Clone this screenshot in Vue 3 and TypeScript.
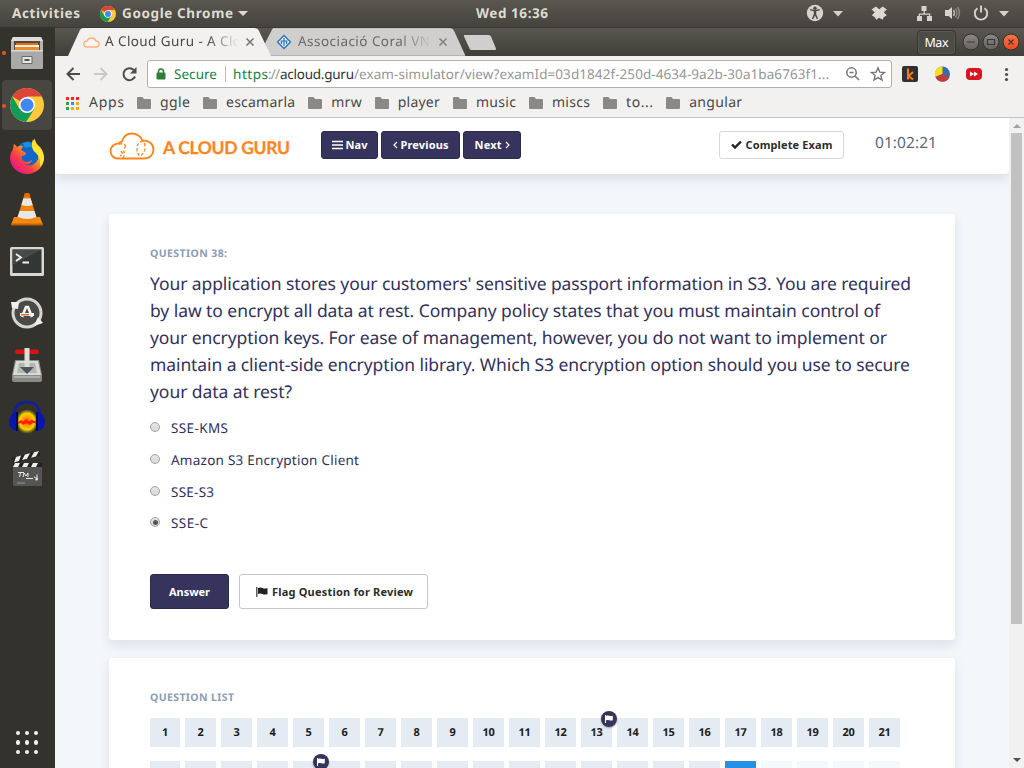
<script setup lang="ts">
interface Bookmark { label: string; width: number }
interface Option { label: string; width: number; picked: boolean }
interface Cell { n: number; label: string; state: 'done' | 'current' | 'open'; flagged: boolean }

// Tracks a label out or in so that it fills the given width.
const vFit = {
  mounted(el: HTMLElement, binding: { value: number }) {
    const count = (el.textContent ?? '').length
    const natural = el.getBoundingClientRect().width
    el.style.letterSpacing = `${(binding.value - natural) / Math.max(1, count - 1)}px`
    el.style.width = `${binding.value}px`
  },
}

const bookmarks: Bookmark[] = [
  { label: 'ggle', width: 30 },
  { label: 'escamarla', width: 69 },
  { label: 'mrw', width: 30.5 },
  { label: 'player', width: 42 },
  { label: 'music', width: 40 },
  { label: 'miscs', width: 38 },
  { label: 'to...', width: 27 },
  { label: 'angular', width: 53 },
]

const lines = [
  { text: "Your application stores your customers' sensitive passport information in S3. You are required", width: 761 },
  { text: 'by law to encrypt all data at rest. Company policy states that you must maintain control of', width: 730 },
  { text: 'your encryption keys. For ease of management, however, you do not want to implement or', width: 737 },
  { text: 'maintain a client-side encryption library. Which S3 encryption option should you use to secure', width: 760 },
  { text: 'your data at rest?', width: 142 },
]

const options: Option[] = [
  { label: 'SSE-KMS', width: 57, picked: false },
  { label: 'Amazon S3 Encryption Client', width: 188, picked: false },
  { label: 'SSE-S3', width: 43, picked: false },
  { label: 'SSE-C', width: 37, picked: true },
]

const flagged = [13, 26]
const cells: Cell[] = Array.from({ length: 42 }, (_, i) => ({
  n: i + 1,
  label: i < 21 ? String(i + 1) : '',
  state: i + 1 < 38 ? 'done' : i + 1 === 38 ? 'current' : 'open',
  flagged: flagged.includes(i + 1),
}))
const swatches = ['#f22', '#f22', '#f22', '#35a04c', '#3b8cf0', '#fba31c', '#35a04c', '#fba31c', '#fba31c']
</script>

<template>
  <div class="desktop">
    <header class="topbar">
      <b v-fit="68" class="activities">Activities</b>
      <svg class="tiny-chrome" width="16" height="16" viewBox="0 0 34 34">
        <circle cx="17" cy="17" r="17" fill="#fdca3d" />
        <path d="M17 17 2.3 8.5A17 17 0 0 1 31.7 8.5H17Z" fill="#dc4437" />
        <path d="M2.3 8.5A17 17 0 0 0 16 34L24.4 21 17 17 9.6 21Z" fill="#159b58" />
        <circle cx="17" cy="17" r="8" fill="#fff" /><circle cx="17" cy="17" r="6.3" fill="#4286f5" />
      </svg>
      <b v-fit="111" class="appname">Google Chrome</b>
      <i class="caret"></i>
      <b v-fit="72" class="clock">Wed 16:36</b>
      <svg class="tray" width="204" height="28" viewBox="0 0 204 28" fill="#d6d3cd">
        <circle cx="9" cy="13" r="8.2" />
        <g fill="#4b4a44"><circle cx="9" cy="8.3" r="1.7" /><path d="M4 10.2l3.8 1v3L5.9 18.6l1.2.6L9 15.5l1.9 3.7 1.2-.6-1.9-4.4v-3l3.8-1-.3-1.1-4.7.8-4.7-.8Z" /></g>
        <path d="M27 11h10l-5 5.5Z" />
        <path d="M65.500 9.500 70 6.500l3.300 2.800 3.400-2.800 4.100 3-3 2.800 3 2.900-3.100 2-1.200 2.600-3.200-2-3.200 2-1-2.400-3.300-2.200 3-2.900Z" fill="#dedad3" />
        <path d="M115.500 6h5v5h-5zM111 16h5v5h-5zM121 16h5v5h-5zM117.500 11h1.300v2.500h5.500v3H123v-1.700h-9v1.700h-1.300v-3h4.800z" />
        <path d="M139 10h3.500L146 7v12l-3.500-3H139Z" />
        <path d="M147.500 10q1.800 3 0 6" fill="none" stroke="#c5c2bb" stroke-width="1.400" />
        <path d="M149.500 8.500q3 4.500 0 9M151.500 7q4 6 0 12" fill="none" stroke="#8b8982" stroke-width="1.400" />
        <path d="M171.500 8.300a6.200 6.200 0 1 0 7 0M175 5.500v7" fill="none" stroke="#d6d3cd" stroke-width="1.900" />
        <path d="M193 11h10l-5 5.500Z" />
      </svg>
    </header>

    <div class="workspace">
      <nav class="dock">
        <div class="slot running">
          <svg width="36" height="36" viewBox="0 0 36 36">
            <path d="M4 2h28l2 4v26q0 2-2 2H4q-2 0-2-2V6Z" fill="#b4b4b2" />
            <path d="M4 2h28l2 4H2Z" fill="#dedddb" /><path d="M5 6h26v10H5Z" fill="#514a43" />
            <path d="M7 8h22v8H7Z" fill="#e36d19" /><path d="M6 10h24v2H6Z" fill="#fff2db" /><path d="M6 12h24v3H6Z" fill="#e98a35" />
            <path d="M2 15h32v17q0 2-2 2H4q-2 0-2-2Z" fill="#a9a9a7" /><path d="M2 15h32v1.500H2Z" fill="#d8d8d6" />
            <path d="M13 21.500h10v7H13Z" fill="#e6e6e4" stroke="#6a6a69" /><path d="M15.500 24h5v2h-5Z" fill="#555" />
          </svg>
        </div>
        <div class="slot running focused">
          <svg width="34" height="34" viewBox="0 0 34 34">
            <circle cx="17" cy="17" r="17" fill="#fdca3d" />
            <path d="M17 17 2.300 8.500A17 17 0 0 1 31.700 8.500H17Z" fill="#dc4437" />
            <path d="M2.300 8.500A17 17 0 0 0 16 34L24.400 21 17 17 9.600 21Z" fill="#159b58" />
            <circle cx="17" cy="17" r="8" fill="#fff" /><circle cx="17" cy="17" r="6.500" fill="#4286f5" />
          </svg>
        </div>
        <div class="slot">
          <svg width="34" height="36" viewBox="0 0 34 36">
            <defs>
              <linearGradient id="fx" x1="0.900" y1="0.100" x2="0.150" y2="0.900"><stop offset="0" stop-color="#fff04a" /><stop offset=".4" stop-color="#ff9a1b" /><stop offset=".7" stop-color="#ff3b45" /><stop offset="1" stop-color="#e2178b" /></linearGradient>
            </defs>
            <circle cx="18" cy="15" r="12.500" fill="#1565c8" /><path d="M13 4q10-4 14 8-6-6-12-3Z" fill="#1791dc" />
            <path d="M4 5q2 1 3 3 3-2 6-1l-2 4 5 3q0 2-4 3-1 5 4 6 4 0 6-2-1 5-8 4 8 4 13-3 3-5 0-10l-4-4q-2-6 2-8 0 4 5 8 4 5 4 11A17 16 0 0 1 0 19q0-5 3-9 0-3 1-5Z" fill="url(#fx)" />
            <path d="M23 0q0 4 5 8 6 5 6 12-1 5-4 8 1-9-4-14-6-4-3-14Z" fill="#ffe532" />
          </svg>
        </div>
        <div class="slot">
          <svg width="32" height="36" viewBox="0 0 32 36">
            <path d="M3 26h26l3 8H0Z" fill="#f58a0b" /><path d="M0 32.500h32l-.5 2H.5Z" fill="#c75c00" />
            <path d="M14 2h4l8 26q-9 5-20 0Z" fill="#f5820b" /><path d="M14 2h4l1.300 4h-6.600Z" fill="#e36b05" />
            <path d="m12.300 7.500h7.400l2 6.500q-5 2-11.400 0ZM8.600 20h14.800l2 6q-9 4-18.800 0Z" fill="#e8e8e8" />
          </svg>
        </div>
        <div class="slot">
          <svg width="34" height="29" viewBox="0 0 34 29">
            <rect width="34" height="29" rx="1.500" fill="#d7d7d5" /><rect x="2.500" y="2.500" width="29" height="23.500" fill="#343635" />
            <path d="M2.500 2.500h29L2.500 18Z" fill="#484a49" />
            <path d="m6 7 5 3.500L6 14M12.500 15.500H19" fill="none" stroke="#f2f2f2" stroke-width="1.800" />
          </svg>
        </div>
        <div class="slot">
          <svg width="34" height="34" viewBox="0 0 34 34">
            <circle cx="17" cy="17" r="14" fill="#4a4a48" stroke="#d4d4d0" stroke-width="3" />
            <path d="M1 6h8l-1 7-6-1ZM33 27l-9 3 4-9Z" fill="#efefec" />
            <path d="m12 21 4-10h2l4 10" fill="none" stroke="#f6f6f4" stroke-width="2.600" /><path d="M10 17h14v3H10Z" fill="#f6f6f4" /><path d="M11 18h8v1.500h-8Z" fill="#f06a28" />
          </svg>
        </div>
        <div class="slot">
          <svg width="32" height="34" viewBox="0 0 32 34">
            <path d="M4 12h24l3 15v5q0 2-2 2H3q-2 0-2-2v-5Z" fill="#8b8c88" /><path d="M5 13h22l3 14H2Z" fill="#d9dad6" /><path d="M8 15h16l2 10H6Z" fill="#b4b6b2" />
            <rect x="4" y="1.500" width="24" height="4.500" rx="2.200" fill="#d91212" /><rect x="13.500" y="0" width="5" height="19" fill="#dededc" />
            <path d="M9 19h14l-7 7Z" fill="#50555a" /><path d="M3 29h26" stroke="#b9bab7" stroke-width="1.500" />
          </svg>
        </div>
        <div class="slot">
          <svg width="36" height="34" viewBox="0 0 36 34">
            <defs><radialGradient id="au"><stop offset="0" stop-color="#ff4a00" /><stop offset=".4" stop-color="#ffa000" /><stop offset=".7" stop-color="#f3d500" /><stop offset="1" stop-color="#9d8b00" stop-opacity=".2" /></radialGradient></defs>
            <ellipse cx="18" cy="21.500" rx="11" ry="12" fill="url(#au)" />
            <path d="M9 22l3-2 2 1.500 3-2.500 3 2.500 3-2 2 1.500 2-.5v3l-3-.5-3 2-4-2-3 2-2-2-3 1Z" fill="#ff2100" />
            <path d="M5 15Q6 2 18 2t13 13" fill="none" stroke="#101f9f" stroke-width="2.600" />
            <path d="M8 12v19q-8-1-8-10 1-8 8-9ZM28 12v19q8-1 8-10-1-8-8-9Z" fill="#0716ae" /><path d="M8 12v19M28 12v19" stroke="#02094f" stroke-width="2" />
          </svg>
        </div>
        <div class="slot">
          <svg width="32" height="36" viewBox="0 0 32 36">
            <path d="M2 15h29v19q0 1-1 1H3q-1 0-1-1Z" fill="#555653" /><path d="m1 7 27-7 1.500 4.500L3 12Z" fill="#222" />
            <path d="m5 6 5-1.500L8 10l-5 1.500ZM14 3.500l5-1.300-3 5.500-5 1.300ZM23 1.200 28 0l-3 5.500-5 1.200Z" fill="#eee" />
            <path d="M2 12h29v4H2Z" fill="#222" /><path d="M4 12h5l-2 4H2ZM13 12h5l-2 4h-5ZM22 12h5l-2 4h-5Z" fill="#eee" />
            <path d="M7 21.500h6M9.500 22l-1 4M12 26l1-4 2 3 2-3v4M15 27.500h7m4-4v6M23 26l4 2-3 1" fill="none" stroke="#e8e8e8" stroke-width="1" /><path d="M6 32h8" stroke="#999" />
          </svg>
        </div>
        <div class="launcher"><i v-for="d in 9" :key="d"></i></div>
      </nav>

      <section class="browser">
        <div class="tabstrip">
          <svg class="tab-shapes" width="460" height="28" viewBox="0 0 460 28">
            <path d="M207 27.500 211 14 218 .5H395q3 0 4 3L410 27.500Z" fill="#d1cfcd" stroke="#e3e1df" stroke-width=".6" />
            <path d="M13 28 24.500 3q1-3 4-3H199q4 0 5 3l12 25Z" fill="#f2f1f0" />
            <path d="M216 27.500H410" stroke="#b5b3b1" />
            <path d="M409.500 7h24q2 0 2.500 1.500l5 12q.5 1.500-1.500 1.500h-23q-1.500 0-2-1.500l-5.500-12Q408.500 7 409.500 7Z" fill="#d1cfcd" />
          </svg>
          <div class="tab first">
            <svg width="17" height="11" viewBox="0 0 17 11"><path d="M4 10Q.8 10 .8 7T4 4Q5 1 8.500 1T13 4q3.200 0 3.200 3T13 10Z" fill="#fff4ea" stroke="#fbb183" stroke-width="1.300" /></svg>
            <div class="title"><span v-fit="136">A Cloud Guru - A Clo</span></div>
            <svg width="10" height="10" viewBox="0 0 10 10"><path d="m1.500 1.500 7 7m0-7-7 7" stroke="#777" stroke-width="1.600" /></svg>
          </div>
          <div class="tab second">
            <svg width="16" height="16" viewBox="0 0 16 16"><path d="m8 1.500 6.500 6.500L8 14.500 1.500 8Z" fill="#e7f1fa" stroke="#2472b8" stroke-width="1.300" /><path d="M5.500 7v3M8 4v8M10.500 7v3M4.500 7h7" stroke="#2472b8" stroke-width="1.200" /></svg>
            <div class="title"><span v-fit="132">Associació Coral VN</span></div>
            <svg width="10" height="10" viewBox="0 0 10 10"><path d="m1.500 1.500 7 7m0-7-7 7" stroke="#858381" stroke-width="1.600" /></svg>
          </div>
          <div class="controls">
            <div class="profile"><span v-fit="24">Max</span></div>
            <svg width="58" height="18" viewBox="0 0 58 18">
              <defs>
                <linearGradient id="wb" x2="0" y2="1"><stop offset="0" stop-color="#8a8880" /><stop offset="1" stop-color="#65635c" /></linearGradient>
                <linearGradient id="wc" x2="0" y2="1"><stop offset="0" stop-color="#f7744f" /><stop offset="1" stop-color="#f04a1c" /></linearGradient>
              </defs>
              <g stroke="#33322d"><circle cx="9" cy="9" r="8" fill="url(#wb)" /><circle cx="29" cy="9" r="8" fill="url(#wb)" /><circle cx="49" cy="9" r="8" fill="url(#wc)" /></g>
              <path d="M5 9h8M25.500 6.500h7v5h-7ZM46.500 6.500l5 5m0-5-5 5" fill="none" stroke="#3b3934" stroke-width="1.200" />
            </svg>
          </div>
        </div>

        <div class="toolbar">
          <svg class="history" width="80" height="20" viewBox="0 0 80 20" fill="none" stroke-width="2">
            <path d="M16 10H4m5.500-6L3.500 10l6 6" stroke="#4c4c4c" /><path d="M30 10h12m-5.500-6 6 6-6 6" stroke="#c9c8c7" />
            <path d="M71 12.500A6 6 0 1 1 69.800 6" stroke="#4c4c4c" /><path d="M72.500 3v6.500H66Z" fill="#4c4c4c" />
          </svg>
          <div class="omnibox">
            <svg width="10" height="12" viewBox="0 0 10 12"><path d="M2.500 5V3.500q0-2.500 2.500-2.500t2.500 2.500V5" fill="none" stroke="#2f7e35" stroke-width="1.500" /><rect x="0.500" y="4.500" width="9" height="7" rx="1" fill="#2f7e35" /></svg>
            <span v-fit="43" class="secure">Secure</span>
            <i class="bar"></i>
            <span v-fit="35" class="scheme">https</span><span v-fit="12" class="path colon">://</span><span v-fit="74" class="host">acloud.guru</span><span v-fit="475" class="path">/exam-simulator/view?examId=03d1842f-250d-4634-9a2b-30a1ba6763f1...</span>
            <svg class="tools" width="42" height="16" viewBox="0 0 42 16" fill="none" stroke="#757575">
              <circle cx="6.500" cy="6.500" r="4.700" stroke-width="1.500" /><path d="m10 10 4 4M4.500 6.500h4" stroke-width="1.600" />
              <path d="m33 1.800 1.800 4.300 4.700.4-3.600 3 1.100 4.600-4-2.500-4 2.500 1.100-4.600-3.600-3 4.700-.4Z" stroke-width="1.400" />
            </svg>
          </div>
          <svg class="extensions" width="110" height="18" viewBox="0 0 110 18">
            <rect x="0" y="1" width="16" height="16" rx="2" fill="#303033" /><path d="M6 3.500v11M11 7l-4.500 4L11 14.500" fill="none" stroke="#f47c10" stroke-width="2" />
            <circle cx="40.500" cy="9" r="7.500" fill="#336eaf" /><path d="M40.500 9V1.500A7.500 7.500 0 0 0 33.500 12Z" fill="#f6df1a" /><path d="m40.500 9-7 3a7.500 7.500 0 0 0 14 0Z" fill="#bd3d3d" />
            <rect x="64" y="3" width="16" height="12" rx="4" fill="#df1320" /><path d="m68 6.500 4 2.500-4 2.500ZM72 6.500 76 9l-4 2.500Z" fill="#fff" />
            <g fill="#4c4c4c"><circle cx="104.500" cy="4.500" r="1.600" /><circle cx="104.500" cy="9.500" r="1.600" /><circle cx="104.500" cy="14.500" r="1.600" /></g>
          </svg>
        </div>

        <div class="bookmarks">
          <span class="apps-grid"><svg width="13" height="13" viewBox="0 0 13 13"><rect v-for="(c, i) in swatches" :key="i" :x="(i % 3) * 5" :y="Math.floor(i / 3) * 5" width="3" height="3" :fill="c" /></svg></span>
          <span v-fit="35" class="apps">Apps</span>
          <div v-for="b in bookmarks" :key="b.label" class="mark">
            <svg width="14" height="12" viewBox="0 0 14 12"><path d="M1 0h4.500L7 2h6q1 0 1 1v8q0 1-1 1H1q-1 0-1-1V1q0-1 1-1Z" fill="#8a8988" /></svg>
            <span v-fit="b.width">{{ b.label }}</span>
          </div>
        </div>

        <div class="viewport">
          <main class="page">
            <header class="exam-bar">
              <svg class="cloud" width="46" height="28" viewBox="0 0 46 28" fill="none" stroke="#ff861f">
                <path d="M9 26.500C4 26.500 1.500 23 1.500 19S5 11.500 9.500 11.500q1-1.500 3.500-2C14.500 4 18.500 1.500 23 1.500s9 3 10.500 7c7-.5 11 4 11 9s-3.500 9-9.500 9Z" stroke-width="1.900" />
                <path d="M10 12q5-1 7 2M17 14q-3 3-2 6 1 3-1 6M12 19l2 3-3 2" stroke-width="1.400" stroke-dasharray="3 2" />
                <path d="M34 9q-6 1-6 8 0 5 3 7 5-3 5-9 0-4-2-6Z" stroke-width="1.300" stroke-dasharray="3 2" />
              </svg>
              <span v-fit="127" class="brand">A CLOUD GURU</span>
              <button class="btn dark nav"><svg width="11" height="10" viewBox="0 0 11 10"><path d="M0 1.500h11M0 5h11M0 8.500h11" stroke="#fff" stroke-width="1.600" /></svg><span v-fit="22">Nav</span></button>
              <button class="btn dark prev"><svg width="5" height="8" viewBox="0 0 5 8"><path d="M4 1 1 4l3 3" fill="none" stroke="#fff" stroke-width="1.200" /></svg><span v-fit="48">Previous</span></button>
              <button class="btn dark next"><span v-fit="27">Next</span><svg width="5" height="8" viewBox="0 0 5 8"><path d="m1 1 3 3-3 3" fill="none" stroke="#fff" stroke-width="1.200" /></svg></button>
              <button class="btn light complete"><svg width="11" height="9" viewBox="0 0 11 9"><path d="m1 4.500 3 3L10 1.500" fill="none" stroke="#222" stroke-width="2.400" /></svg><span v-fit="87">Complete Exam</span></button>
              <span v-fit="62" class="timer">01:02:21</span>
            </header>

            <section class="card question">
              <h6><span v-fit="77">QUESTION 38:</span></h6>
              <p class="prompt"><span v-for="l in lines" :key="l.text" v-fit="l.width">{{ l.text }}</span></p>
              <ul>
                <li v-for="o in options" :key="o.label"><i class="radio" :class="{ picked: o.picked }"></i><span v-fit="o.width">{{ o.label }}</span></li>
              </ul>
              <div class="actions">
                <button class="btn dark answer"><span v-fit="41">Answer</span></button>
                <button class="btn light flag"><svg width="12" height="10" viewBox="0 0 12 10"><path d="M.8 0v10" stroke="#333" stroke-width="1.200" /><path d="M2 1q2.500-1 4.500 0t5 0v6q-2.500 1-5 0T2 7Z" fill="#222" /></svg><span v-fit="141">Flag Question for Review</span></button>
              </div>
            </section>

            <section class="card list">
              <h6><span v-fit="84">QUESTION LIST</span></h6>
              <div class="grid">
                <div v-for="c in cells" :key="c.n" class="cell" :class="c.state">
                  {{ c.label }}
                  <span v-if="c.flagged" class="badge"><svg width="8" height="8" viewBox="0 0 8 8"><path d="M.5 0v8" stroke="#fff" /><path d="M1 .8q1.800-.6 3.400 0t3.400 0v4.400q-1.800.6-3.400 0T1 5.200Z" fill="#fff" /></svg></span>
                </div>
              </div>
            </section>
          </main>
          <aside class="scrollbar">
            <svg width="8" height="4" viewBox="0 0 8 4"><path d="m0 4 4-4 4 4Z" fill="#a3a3a3" /></svg>
            <div class="thumb"></div>
            <svg class="down" width="8" height="4" viewBox="0 0 8 4"><path d="m0 0 4 4 4-4Z" fill="#505050" /></svg>
          </aside>
        </div>
      </section>
    </div>
  </div>
</template>

<style>
html, body { margin: 0; overflow: hidden; }
</style>

<style scoped>
* { box-sizing: border-box; }
svg { display: block; flex: none; }
span, b { white-space: nowrap; }
.desktop { width: 1024px; height: 768px; overflow: hidden; display: flex; flex-direction: column; background: #33322d; font-family: "Noto Sans", "Open Sans", sans-serif; text-rendering: geometricPrecision; }
.topbar { height: 27px; flex: none; display: flex; align-items: center; background: linear-gradient(#59574f, #45433d); color: #dfdbd2; font-size: 13.5px; line-height: 27px; padding-left: 12px; }
.topbar b { display: inline-block; font-weight: 700; flex: none; }
.tiny-chrome { margin-left: 20px; }
.appname { margin-left: 6px; }
.caret { border: 5px solid transparent; border-top-color: #dfdbd2; border-bottom: 0; margin-left: 5px; }
.clock { margin-left: 228px; }
.tray { margin-left: 258px; }
.workspace { flex: 1; min-height: 0; display: flex; }
.dock { width: 55px; flex: none; background: #33322d; display: flex; flex-direction: column; }
.slot { height: 52px; flex: none; display: flex; align-items: center; justify-content: center; position: relative; margin: 0 3px 0 2px; border-radius: 4px; }
.slot.focused { background: #484640; height: 50px; margin-top: 1px; margin-bottom: 1px; }
.slot.running::before { content: ""; position: absolute; left: 0; top: 24px; width: 4px; height: 4px; border-radius: 50%; background: #e95420; }
.launcher { display: grid; grid-template-columns: repeat(3, 4px); gap: 5px; margin: auto 0 14px 16px; }
.launcher i { width: 4.300px; height: 4.300px; background: #f1f1ef; border-radius: 50%; }
.browser { flex: 1; min-width: 0; display: flex; flex-direction: column; background: #f2f1f0; }
.tabstrip { height: 29px; flex: none; display: flex; position: relative; background: linear-gradient(#59574f, #403f39); border-top: 1px solid #3b3934; }
.tab-shapes { position: absolute; left: 0; top: 0; }
.tab { position: relative; height: 28px; display: flex; align-items: center; font-size: 13.500px; color: #484846; }
.tab.first { margin-left: 28px; width: 172px; }
.tab.second { margin-left: 21px; width: 172px; color: #6b6968; }
.title { overflow: hidden; margin-left: 5px; width: 135px; margin-right: 5px; mask-image: linear-gradient(90deg, #000 76%, transparent 99%); height: 28px; line-height: 27px; }
.second .title { width: 136px; margin-left: 6px; margin-right: 5px; }
.title span { display: inline-block; }
.controls { margin-left: auto; display: flex; align-items: center; padding-right: 4px; gap: 5px; }
.profile { width: 39px; height: 25px; margin-right: 1px; border: 1px solid #34332e; border-radius: 4px; background: #4d4b45; color: #fff; font-size: 12.500px; display: flex; justify-content: center; line-height: 23px; box-shadow: inset 0 0 0 1px #5b5952; }
.toolbar { height: 36px; flex: none; display: flex; align-items: center; padding-left: 7px; }
.history { margin-left: 2px; }
.omnibox { margin-left: 3px; width: 745px; height: 28px; border: 1px solid #b1b0af; border-radius: 3px; background: #fff; display: flex; align-items: center; padding-left: 8px; font-size: 13.500px; line-height: 26px; }
.omnibox span { flex: none; }
.secure, .scheme { color: #168243; }
.secure { margin-left: 8px; }
.bar { width: 1px; height: 16px; background: #b8b8b8; margin: 0 7px 0 8px; }
.path { color: #969696; }
.host { color: #333; }
.tools { margin-left: 16px; }
.extensions { margin-left: 10px; }
.bookmarks { height: 26px; flex: none; display: flex; align-items: center; padding-left: 11px; font-size: 14px; line-height: 22px; color: #484846; border-bottom: 1px solid #c4c3c2; padding-bottom: 3px; }
.apps { margin-left: 10px; }
.mark { display: flex; align-items: center; gap: 9px; margin-left: 13px; flex: none; }
.mark + .mark { margin-left: 13.100px; }
.viewport { flex: 1; min-height: 0; display: flex; }
.page { width: 954px; flex: none; background: #f3f7fa; overflow: hidden; display: flex; flex-direction: column; }
.exam-bar { height: 56px; flex: none; background: #fff; border-radius: 0 0 4px 4px; box-shadow: 0 5px 12px rgba(50, 50, 93, .13); display: flex; align-items: flex-start; padding-left: 54px; position: relative; }
.cloud { margin-top: 14px; }
.brand { margin-left: 8px; margin-top: 16px; font: 700 17.500px/28px Lato, sans-serif; color: #ff861f; -webkit-text-stroke: .3px #ff861f; }
.btn { font: 700 11px/1 "Noto Sans", sans-serif; border-radius: 3px; border: 1px solid; display: flex; align-items: center; justify-content: center; gap: 3px; padding: 0 0 1px; margin: 0; height: 28px; flex: none; }
.dark { background: #36345c; border-color: #2b294d; color: #fff; }
.light { background: #fff; border-color: #d8d8d8; color: #2d2d2d; gap: 4px; }
.exam-bar .btn { margin-top: 13px; }
.exam-bar .nav { width: 57px; margin-left: 31px; }
.exam-bar .prev { width: 79px; margin-left: 3px; }
.exam-bar .next { width: 58px; margin-left: 3px; }
.exam-bar .complete { width: 125px; margin-left: 198px; }
.timer { margin-left: 31px; margin-top: 12px; font-size: 15.500px; line-height: 24px; color: #5c6678; }
.card { width: 846px; margin-left: 54px; background: #fff; border-radius: 4px; box-shadow: 0 5px 12px rgba(50, 50, 93, .11); flex: none; padding: 30px 41px 0; }
.question { margin-top: 40px; height: 426px; }
.list { margin-top: 18px; height: 300px; }
h6 { margin: 0; font-size: 10.500px; line-height: 20px; font-weight: 700; color: #8c9db2; }
h6 span { display: inline-block; }
.prompt { margin: 7px 0 0; font-size: 17.500px; line-height: 27px; color: #32315b; }
.prompt span { display: block; width: max-content; }
ul { list-style: none; margin: 6.500px 0 0; padding: 0; }
li { height: 31.700px; display: flex; align-items: center; font-size: 13.500px; color: #32315b; gap: 11px; }
.radio { width: 10px; height: 10px; border-radius: 50%; border: 1px solid #a3a3a3; background: linear-gradient(#e3e3e3, #d9d9d9); margin-top: -2px; display: flex; align-items: center; justify-content: center; }
.picked::after { content: ""; width: 5px; height: 5px; border-radius: 50%; background: #555; }
.actions { display: flex; gap: 10px; margin-top: 35px; }
.actions .btn { height: 35px; padding-bottom: 0; }
.answer { width: 79px; }
.actions .flag { width: 189px; border-color: #c6c6c6; padding-left: 2px; }
.grid { display: grid; grid-template-columns: repeat(21, 31px); column-gap: 5px; row-gap: 14px; margin: 10px 0 0 -1px; }
.cell { height: 29px; position: relative; font-size: 11px; font-weight: 700; line-height: 29px; text-align: center; color: #1d1d1d; background: #e4ebf2; letter-spacing: -.3px; }
.cell:nth-child(21n + 1) { margin-left: 1px; }
.cell.current { background: #258fe3; color: #fff; }
.cell.open { background: #f5f9fc; }
.badge { position: absolute; left: 20px; top: -7px; width: 16px; height: 16px; border-radius: 50%; background: #36345c; display: flex; align-items: center; justify-content: center; box-shadow: 0 1px 2px rgba(0, 0, 0, .3); z-index: 1; }
.scrollbar { flex: 1; background: #f1f1f1; display: flex; flex-direction: column; align-items: center; padding: 6px 0 6px; }
.thumb { width: 11px; height: 491px; margin-top: 5px; background: #c1c1c1; flex: none; }
.down { margin-top: auto; }
</style>
